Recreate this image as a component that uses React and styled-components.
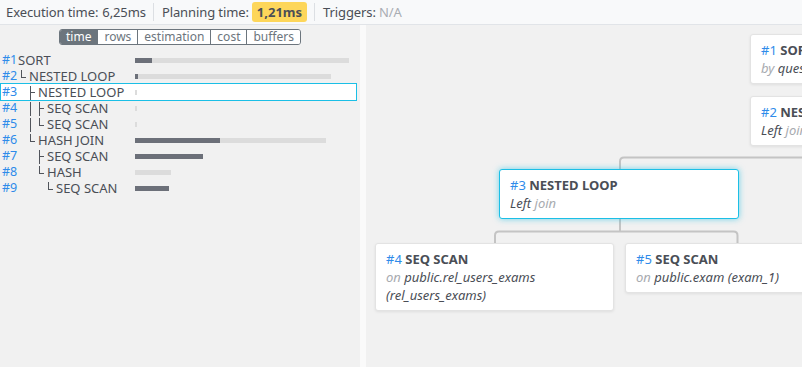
import React from 'react'
import styled, { createGlobalStyle, css } from 'styled-components'

const GlobalStyle = createGlobalStyle`
  html, body, #root { margin: 0; padding: 0; height: 100%; }
  body {
    font-family: "Noto Sans", "Open Sans", sans-serif;
    color: #4a4e56;
    background: #f1f1f1;
    overflow: hidden;
  }
`

const BLUE = '#2e8bea'
const CYAN = '#1bbfe6'

const rows = [
  { id: 1, label: 'SORT', guides: [], bg: 214, fill: 17 },
  { id: 2, label: 'NESTED LOOP', guides: ['elbow'], bg: 196, fill: 3 },
  { id: 3, label: 'NESTED LOOP', guides: ['blank', 'tee'], bg: 2, fill: 0, selected: true },
  { id: 4, label: 'SEQ SCAN', guides: ['blank', 'pipe', 'tee'], bg: 2, fill: 0 },
  { id: 5, label: 'SEQ SCAN', guides: ['blank', 'pipe', 'elbow'], bg: 2, fill: 0 },
  { id: 6, label: 'HASH JOIN', guides: ['blank', 'elbow'], bg: 191, fill: 85 },
  { id: 7, label: 'SEQ SCAN', guides: ['blank', 'blank', 'tee'], bg: 68, fill: 68 },
  { id: 8, label: 'HASH', guides: ['blank', 'blank', 'elbow'], bg: 36, fill: 0 },
  { id: 9, label: 'SEQ SCAN', guides: ['blank', 'blank', 'blank', 'elbow'], bg: 34, fill: 34 },
]

const tabs = ['time', 'rows', 'estimation', 'cost', 'buffers']

const nodes = [
  { id: 1, x: 384, y: 9, w: 240, name: 'SORT', lines: [[['by', true], ['questions.id', false]]] },
  { id: 2, x: 384, y: 71, w: 240, name: 'NESTED LOOP', lines: [[['Left', false], ['join', true]]] },
  { id: 3, x: 133, y: 144, w: 240, name: 'NESTED LOOP', selected: true, lines: [[['Left', false], ['join', true]]] },
  { id: 4, x: 9, y: 218, w: 239, name: 'SEQ SCAN', lines: [[['on', true], ['public.rel_users_exams', false]], [['(rel_users_exams)', false]]] },
  { id: 5, x: 259, y: 218, w: 240, name: 'SEQ SCAN', lines: [[['on', true], ['public.exam (exam_1)', false]]] },
]

export default function App() {
  return (
    <Page>
      <GlobalStyle />
      <TopBar>
        <Stat>Execution time: <b>6,25ms</b></Stat>
        <Stat>Planning time: <Badge>1,21ms</Badge></Stat>
        <Stat>Triggers: <Muted>N/A</Muted></Stat>
      </TopBar>
      <Body>
        <Sidebar>
          <Tabs>
            {tabs.map((t, i) => (
              <Tab key={t} $active={i === 0}>{t}</Tab>
            ))}
          </Tabs>
          <Tree>
            {rows.map(r => (
              <Row key={r.id} $selected={r.selected}>
                <Label>
                  <Num>#{r.id}</Num>
                  {r.guides.length > 0 && (
                    <Guides>
                      {r.guides.map((g, i) => <Guide key={i} $kind={g} />)}
                    </Guides>
                  )}
                  <Name>{r.label}</Name>
                </Label>
                <Track style={{ width: r.bg }}>
                  <Fill style={{ width: r.fill }} />
                </Track>
              </Row>
            ))}
          </Tree>
        </Sidebar>
        <Gutter />
        <Canvas>
          <Edges width="436" height="342">
            <path d="M 440 132.5 H 258 Q 254 132.5 254 136.5 V 144" />
            <path d="M 254 194 V 206.5" />
            <path d="M 129 218 V 210.5 Q 129 206.5 133 206.5 H 367.5 Q 371.5 206.5 371.5 210.5 V 218" />
          </Edges>
          {nodes.map(n => (
            <Node key={n.id} $selected={n.selected} style={{ left: n.x, top: n.y, width: n.w }}>
              <Title><NodeId>#{n.id}</NodeId> {n.name}</Title>
              {n.lines.map((line, i) => (
                <Detail key={i}>
                  {line.map(([word, light], j) => (
                    <Word key={j} $light={light}>{word}{j < line.length - 1 ? ' ' : ''}</Word>
                  ))}
                </Detail>
              ))}
            </Node>
          ))}
        </Canvas>
      </Body>
    </Page>
  )
}

const Page = styled.div`
  height: 100vh;
  display: flex;
  flex-direction: column;
`

const TopBar = styled.div`
  height: 24px;
  display: flex;
  align-items: center;
  background: #f8f9fa;
  border-bottom: 1px solid #e1e4e8;
  font-size: 13px;
  letter-spacing: -0.1px;
  color: #4a4e56;
`

const Stat = styled.div`
  padding: 0 7px 0 6px;
  display: flex;
  align-items: center;
  gap: 3px;
  white-space: nowrap;
  & + & {
    border-left: 1px solid #dcdfe3;
    padding-left: 8px;
    height: 18px;
  }
  b { font-weight: 400; margin-left: 1px; }
`

const Badge = styled.span`
  background: #fdd65a;
  border-radius: 3px;
  padding: 1px 5px;
  font-weight: 700;
  line-height: 18px;
  letter-spacing: 0;
  color: #4a4e56;
`

const Muted = styled.span`
  color: #a9adb3;
`

const Body = styled.div`
  flex: 1;
  display: flex;
  min-height: 0;
`

const Sidebar = styled.div`
  width: 360px;
  flex: none;
  background: #f1f1f1;
  padding-top: 4px;
`

const Tabs = styled.div`
  display: flex;
  width: max-content;
  margin: 0 auto;
  border: 1px solid #6c757d;
  border-radius: 3px;
  overflow: hidden;
`

const Tab = styled.div`
  font-size: 12px;
  line-height: 14px;
  padding: 0 6px;
  color: #6c757d;
  background: #fff;
  & + & { border-left: 1px solid #6c757d; }
  ${p => p.$active && css`
    background: #6c757d;
    color: #fff;
  `}
`

const Tree = styled.div`
  margin-top: 7px;
  width: 357px;
`

const Row = styled.div`
  height: 16px;
  display: flex;
  align-items: center;
  box-sizing: border-box;
  border: 1px solid transparent;
  ${p => p.$selected && css`
    background: #fff;
    border-color: ${CYAN};
    height: 18px;
    margin: -1px 0;
  `}
`

const Label = styled.div`
  width: 134px;
  flex: none;
  display: flex;
  align-items: center;
  height: 16px;
  line-height: 16px;
  font-size: 13px;
  white-space: nowrap;
`

const Num = styled.span`
  color: ${BLUE};
  width: 15px;
  padding-left: 1px;
  margin-right: 1px;
  flex: none;
  font-size: 12.5px;
`

const Guides = styled.span`
  display: flex;
  padding-left: 2px;
  height: 16px;
`

const Guide = styled.span`
  position: relative;
  width: 9px;
  height: 16px;
  &::before, &::after {
    content: '';
    position: absolute;
    background: #50545b;
    display: ${p => (p.$kind === 'blank' ? 'none' : 'block')};
  }
  &::before {
    left: 1px;
    width: 1px;
    top: 2px;
    height: ${p => (p.$kind === 'elbow' ? 8 : 14)}px;
  }
  &::after {
    left: 1px;
    top: ${p => (p.$kind === 'elbow' ? 9 : 8)}px;
    height: 1px;
    width: 5px;
    display: ${p => (p.$kind === 'tee' || p.$kind === 'elbow' ? 'block' : 'none')};
  }
`

const Name = styled.span`
  color: #4a4e56;
`

const Track = styled.div`
  height: 5px;
  background: #dcdcdc;
  display: flex;
`

const Fill = styled.div`
  height: 100%;
  background: #6c7079;
`

const Gutter = styled.div`
  width: 6px;
  flex: none;
  background: #fafafa;
`

const Canvas = styled.div`
  flex: 1;
  position: relative;
  overflow: hidden;
  background: #f1f1f1;
`

const Edges = styled.svg`
  position: absolute;
  left: 0;
  top: 0;
  fill: none;
  stroke: #c4c4c4;
  stroke-width: 2;
`

const Node = styled.div`
  position: absolute;
  box-sizing: border-box;
  background: #fff;
  border: 1px solid #e3e3e3;
  border-radius: 3px;
  box-shadow: 0 1px 3px rgba(0, 0, 0, 0.08);
  padding: 6px 10px 6px;
  font-size: 13px;
  line-height: 18px;
  ${p => p.$selected && css`
    border-color: ${CYAN};
    box-shadow: 0 0 6px rgba(27, 191, 230, 0.6);
  `}
`

const Title = styled.div`
  font-weight: 700;
  color: #4a4e56;
  white-space: nowrap;
`

const NodeId = styled.span`
  font-weight: 400;
  color: ${BLUE};
`

const Detail = styled.div`
  font-style: italic;
  white-space: nowrap;
`

const Word = styled.span`
  color: ${p => (p.$light ? '#a8abb0' : '#4a4e56')};
`
